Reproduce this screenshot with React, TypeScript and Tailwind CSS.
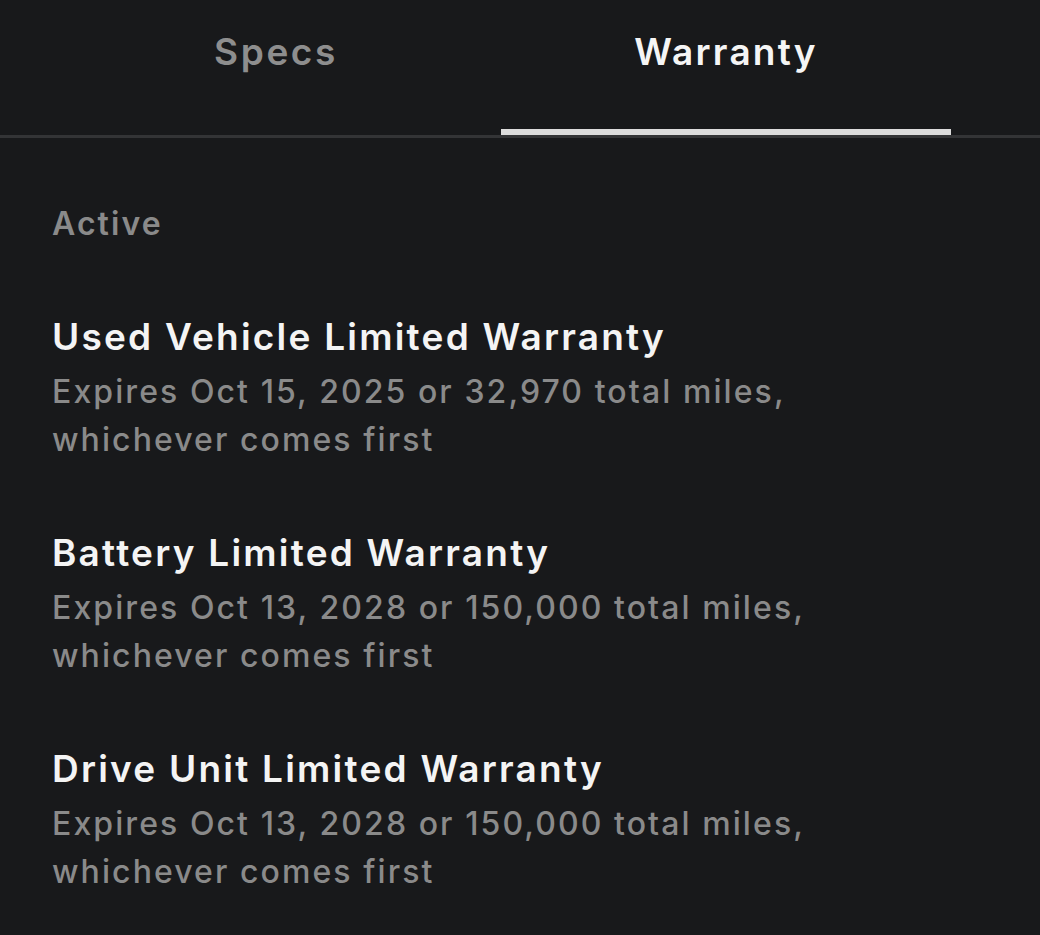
const warranties = [
  {
    title: 'Used Vehicle Limited Warranty',
    detail: 'Expires Oct 15, 2025 or 32,970 total miles,',
  },
  {
    title: 'Battery Limited Warranty',
    detail: 'Expires Oct 13, 2028 or 150,000 total miles,',
  },
  {
    title: 'Drive Unit Limited Warranty',
    detail: 'Expires Oct 13, 2028 or 150,000 total miles,',
  },
];

export default function App() {
  return (
    <div className="w-[1040px] h-[935px] bg-[#18191b] overflow-hidden font-['Inter',sans-serif] antialiased">
      {/* Tabs */}
      <div className="flex pl-[51px] border-b-[3px] border-[#333436]">
        <div className="w-[450px] h-[135px] flex justify-center pt-[28px]">
          <span className="text-[37px] leading-[48px] font-semibold text-[#8e8e8e] tracking-[0.07em]">Specs</span>
        </div>
        <div className="w-[450px] h-[135px] flex flex-col items-center justify-between pt-[28px]">
          <span className="text-[37px] leading-[48px] font-semibold text-[#f5f5f5] tracking-[0.06em]">Warranty</span>
          <div className="w-full h-[6px] bg-[#dcdcdc]" />
        </div>
      </div>

      <div className="px-[52px] pt-[66px]">
        <div className="text-[32px] leading-[40px] font-semibold text-[#8a8a8a] tracking-[0.065em]">Active</div>

        <div className="flex flex-col gap-[65px] mt-[69px]">
          {warranties.map((w) => (
            <div key={w.title} className="flex flex-col">
              <div className="text-[37px] leading-[48px] font-semibold text-[#f4f4f4] tracking-[0.06em]">{w.title}</div>
              <div className="mt-[7px] text-[32px] leading-[48px] font-medium text-[#8a8a8a] tracking-[0.065em]">
                {w.detail}
                <br />
                whichever comes first
              </div>
            </div>
          ))}
        </div>
      </div>
    </div>
  );
}
